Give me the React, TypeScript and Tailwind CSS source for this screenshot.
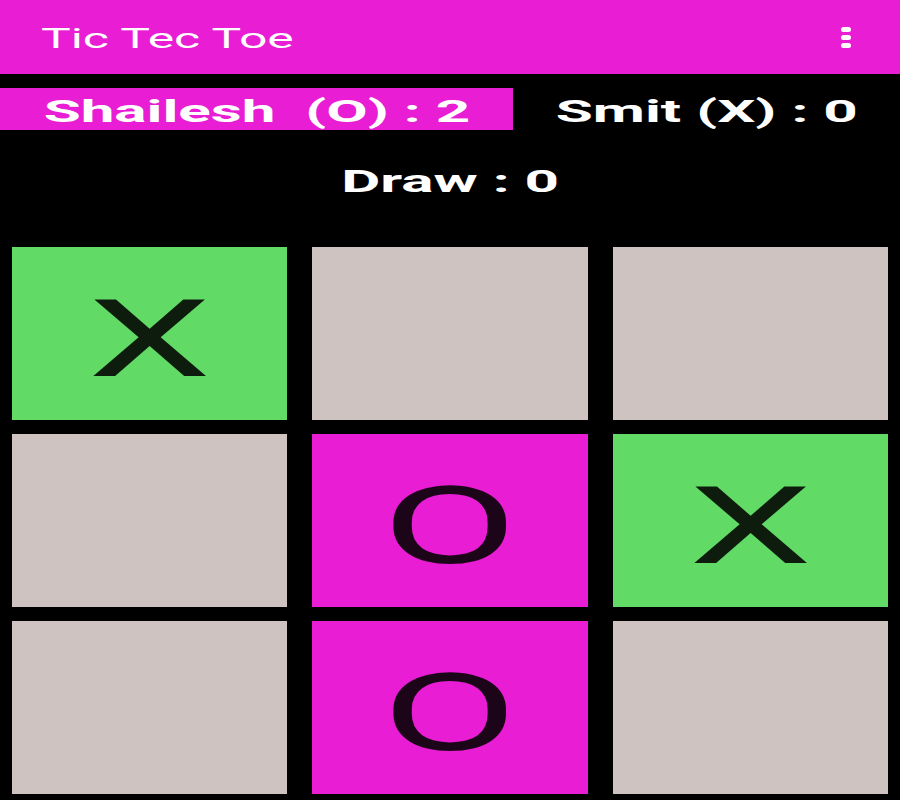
import React from 'react';

type Mark = 'X' | 'O' | '';

const BOARD: Mark[] = ['X', '', '', '', 'O', 'X', '', 'O', ''];

function cellColor(m: Mark) {
  if (m === 'X') return 'bg-[#62db66] text-[#0e1c0e]';
  if (m === 'O') return 'bg-[#e81dd4] text-[#1c0419]';
  return 'bg-[#cfc3c2] text-black';
}

function Wide({ children, className = '' }: { children: React.ReactNode; className?: string }) {
  return <span className={`inline-block ${className}`}>{children}</span>;
}

export default function App() {
  return (
    <div className="w-[900px] h-[800px] bg-black overflow-hidden" style={{ fontFamily: 'Roboto, "Liberation Sans", sans-serif' }}>
      {/* Toolbar */}
      <div className="h-[74px] bg-[#e81dd4] flex items-center justify-between pl-[41px] pr-[49px] shadow-[0_1px_2px_rgba(0,0,0,0.5)]">
        <span className="text-[28px] leading-none text-white pt-[3px]">
          <Wide className="origin-left scale-x-[1.78]">Tic Tec Toe</Wide>
        </span>
        <div className="flex flex-col gap-[3px]">
          <span className="w-[10px] h-[5px] rounded-full bg-white" />
          <span className="w-[10px] h-[5px] rounded-full bg-white" />
          <span className="w-[10px] h-[5px] rounded-full bg-white" />
        </div>
      </div>

      {/* Scores */}
      <div className="mt-[14px] flex h-[42px] items-center">
        <div className="w-[513px] h-full bg-[#e81dd4] flex items-center justify-center">
          <span className="text-[31px] font-bold text-white leading-none whitespace-pre pt-[4px]">
            <Wide className="scale-x-[1.94]">{'Shailesh  (O) : 2'}</Wide>
          </span>
        </div>
        <div className="flex-1 h-full flex items-center justify-center">
          <span className="text-[31px] font-bold text-white leading-none pt-[4px]">
            <Wide className="scale-x-[1.94]">Smit (X) : 0</Wide>
          </span>
        </div>
      </div>

      <div className="mt-[28px] h-[44px] flex items-center justify-center">
        <span className="text-[31px] font-bold text-white leading-none pt-[2px]">
          <Wide className="scale-x-[1.94]">Draw : 0</Wide>
        </span>
      </div>

      {/* Board */}
      <div className="mt-[45px] px-[12px] grid grid-cols-3 gap-x-[25px] gap-y-[14px]">
        {BOARD.map((m, i) => (
          <div key={i} className={`h-[173px] flex items-center justify-center pt-[12px] ${cellColor(m)}`}>
            <span className="text-[107px] leading-none">
              <Wide className="scale-x-[1.84]">{m}</Wide>
            </span>
          </div>
        ))}
      </div>
    </div>
  );
}
